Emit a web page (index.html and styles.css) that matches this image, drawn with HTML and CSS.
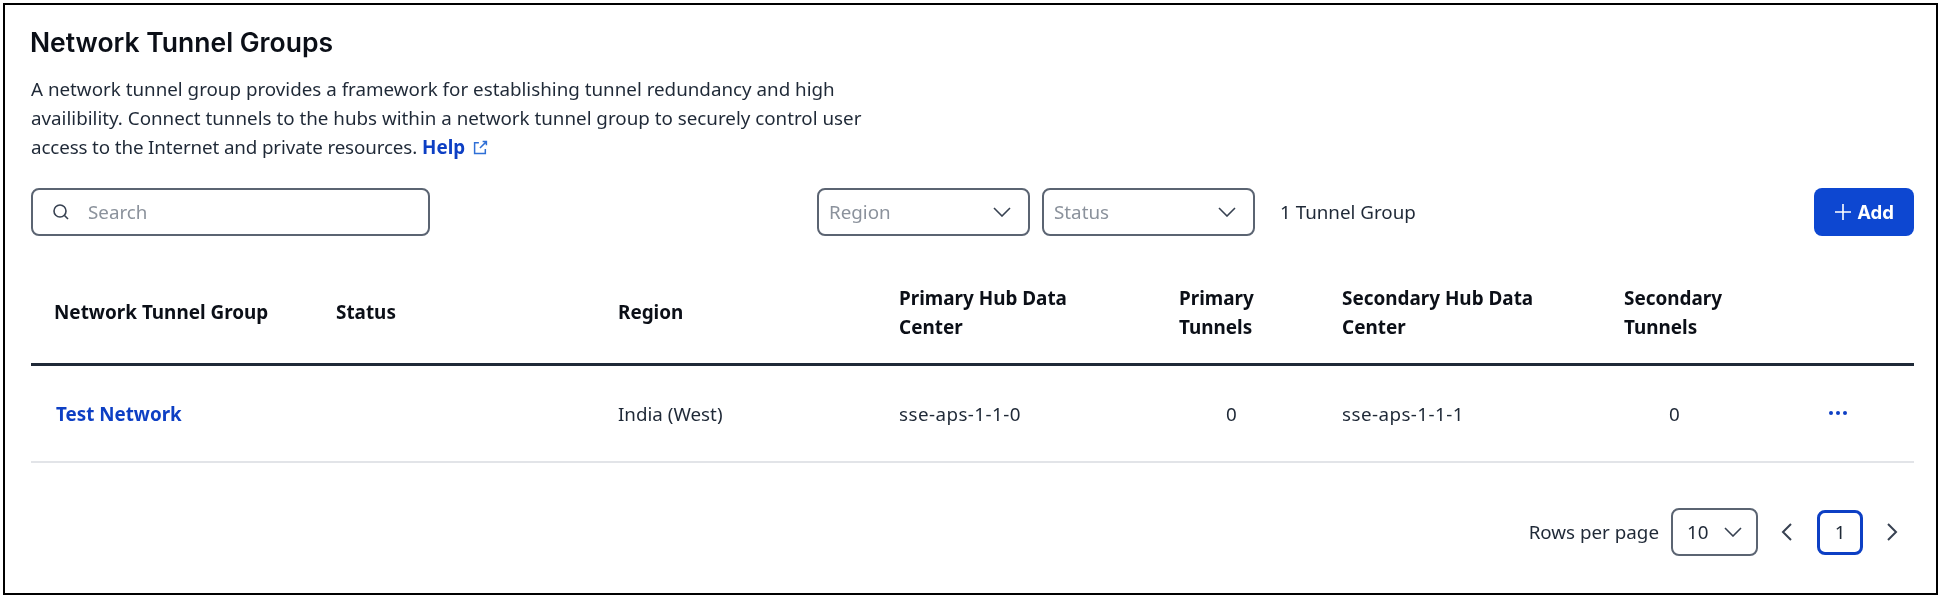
FILE: index.html
```html
<!DOCTYPE html>
<html lang="en">
<head>
<meta charset="utf-8">
<title>Network Tunnel Groups</title>
<link rel="stylesheet" href="styles.css">
</head>
<body>
<main class="frame">
  <h1 class="title">Network Tunnel Groups</h1>
  <p class="intro">A network tunnel group provides a framework for establishing tunnel redundancy and high availibility. Connect tunnels to the hubs within a network tunnel group to securely control user <span class="tail">access to the Internet and private resources.</span><a class="help" href="#">Help <svg class="help-icon" viewBox="0 0 14 14" width="15" height="15" fill="none" stroke="#2f6fd6" stroke-width="1.4"><path d="M5.5 2.5H1.5V12.5H11.5V8.5"/><path d="M6.5 7.5L12.5 1.5M9 1.5H12.5V5"/></svg></a></p>

  <div class="toolbar">
    <label class="field search">
      <svg class="search-icon" viewBox="0 0 18 18" width="18" height="18" fill="none" stroke="#374151" stroke-width="1.6"><circle cx="8" cy="8" r="6"/><path d="M12.5 12.5L16 16"/></svg>
      <span class="placeholder">Search</span>
    </label>
    <div class="filters">
      <div class="field select"><span class="placeholder">Region</span><svg class="chev" viewBox="0 0 18 10" width="18" height="10" fill="none" stroke="#374151" stroke-width="1.6"><path d="M1 1l8 8 8-8"/></svg></div>
      <div class="field select"><span class="placeholder">Status</span><svg class="chev" viewBox="0 0 18 10" width="18" height="10" fill="none" stroke="#374151" stroke-width="1.6"><path d="M1 1l8 8 8-8"/></svg></div>
      <span class="count">1 Tunnel Group</span>
    </div>
    <button class="add" type="button"><svg viewBox="0 0 18 18" width="18" height="18" fill="none" stroke="#fff" stroke-width="1.6"><path d="M9 1V17M1 9H17"/></svg>Add</button>
  </div>

  <div class="table">
    <div class="row head">
      <div class="cell">Network Tunnel Group</div>
      <div class="cell">Status</div>
      <div class="cell">Region</div>
      <div class="cell wrap">Primary Hub Data Center</div>
      <div class="cell narrow">Primary Tunnels</div>
      <div class="cell wrap">Secondary Hub Data Center</div>
      <div class="cell narrow">Secondary Tunnels</div>
      <div class="cell"></div>
    </div>
    <div class="row body">
      <div class="cell"><a class="name" href="#">Test Network</a></div>
      <div class="cell"></div>
      <div class="cell">India (West)</div>
      <div class="cell code">sse-aps-1-1-0</div>
      <div class="cell num-a">0</div>
      <div class="cell code">sse-aps-1-1-1</div>
      <div class="cell num-b">0</div>
      <div class="cell"><span class="dots"><i></i><i></i><i></i></span></div>
    </div>
  </div>

  <div class="pager">
    <span class="rows-label">Rows per page</span>
    <div class="field rows"><span>10</span><svg class="chev" viewBox="0 0 18 10" width="18" height="10" fill="none" stroke="#374151" stroke-width="1.6"><path d="M1 1l8 8 8-8"/></svg></div>
    <svg class="nav prev" viewBox="0 0 12 20" width="12" height="20" fill="none" stroke="#374151" stroke-width="2"><path d="M10 2L2 10l8 8"/></svg>
    <span class="page">1</span>
    <svg class="nav next" viewBox="0 0 12 20" width="12" height="20" fill="none" stroke="#374151" stroke-width="2"><path d="M2 2l8 8-8 8"/></svg>
  </div>
</main>
</body>
</html>
```

FILE: styles.css
```css
* { box-sizing: border-box; }
html, body { margin: 0; background: #fff; }
body { width: 1941px; height: 598px; padding: 3px; overflow: hidden; font-family: "Noto Sans", "Open Sans", sans-serif; color: #1f2937; font-size: 18.8px; }
.frame { width: 1935px; height: 592px; border: 2px solid #000; padding: 19px 22px 0 26px; background: #fff; filter: blur(0.35px); }
.title { margin: 0 0 0 -1px; font-family: Inter, sans-serif; font-size: 26.5px; line-height: 36px; font-weight: 600; color: #0b0f17; }
.intro { margin: 15px 0 0; width: 860px; line-height: 29px; color: #1f2937; }
.tail { letter-spacing: -0.13px; }
.help { margin-left: 5px; color: #0d3fc4; font-weight: 700; text-decoration: none; }
.help-icon { margin-left: 3px; vertical-align: -1px; }
.toolbar { display: flex; align-items: center; margin-top: 26px; height: 48px; }
.field { display: flex; align-items: center; height: 48px; border: 2px solid #5b6472; border-radius: 8px; background: #fff; }
.search { width: 399px; padding-left: 19px; gap: 18px; }
.search-icon { flex: none; }
.placeholder { color: #8b929c; }
.filters { display: flex; align-items: center; gap: 12px; margin-left: 387px; }
.select { width: 213px; padding: 0 17px 0 10px; justify-content: space-between; }
.count { margin-left: 13px; color: #1f2937; }
.add { display: flex; align-items: center; justify-content: center; gap: 5px; margin-left: auto; width: 100px; height: 48px; border: 0; border-radius: 8px; background: #0d47d1; color: #fff; font: 700 18.5px Inter, sans-serif; }
.table { margin-top: 24px; }
.row { display: grid; grid-template-columns: 282px 282px 281px 280px 163px 282px 200px 1fr; align-items: center; padding-left: 23px; }
.head { height: 106px; padding-top: 2px; border-bottom: 3px solid #1f2937; font-weight: 700; font-size: 18.9px; line-height: 29px; color: #0b0f17; }
.wrap { max-width: 200px; }
.narrow { max-width: 110px; }
.body { height: 97px; border-bottom: 2px solid #e2e4e8; }
.name { color: #0d3fc4; font-weight: 700; text-decoration: none; margin-left: 2px; }
.code { letter-spacing: 0.45px; }
.num-a { padding-left: 47px; }
.num-b { padding-left: 45px; }
.dots { display: flex; gap: 3px; margin: 0 0 2px 5px; }
.dots i { width: 4px; height: 4px; border-radius: 50%; background: #0d3fc4; }
.pager { display: flex; align-items: center; justify-content: flex-end; margin-top: 45px; height: 48px; padding-right: 16px; }
.rows-label { margin-right: 12px; }
.rows { width: 87px; padding: 0 14px; justify-content: space-between; }
.rows .chev { flex: none; }
.nav { flex: none; }
.prev { margin: 0 24px 0 23px; }
.page { display: flex; align-items: center; justify-content: center; width: 46px; height: 45px; border: 3px solid #0d3fc4; border-radius: 8px; }
.next { margin-left: 23px; }
```
